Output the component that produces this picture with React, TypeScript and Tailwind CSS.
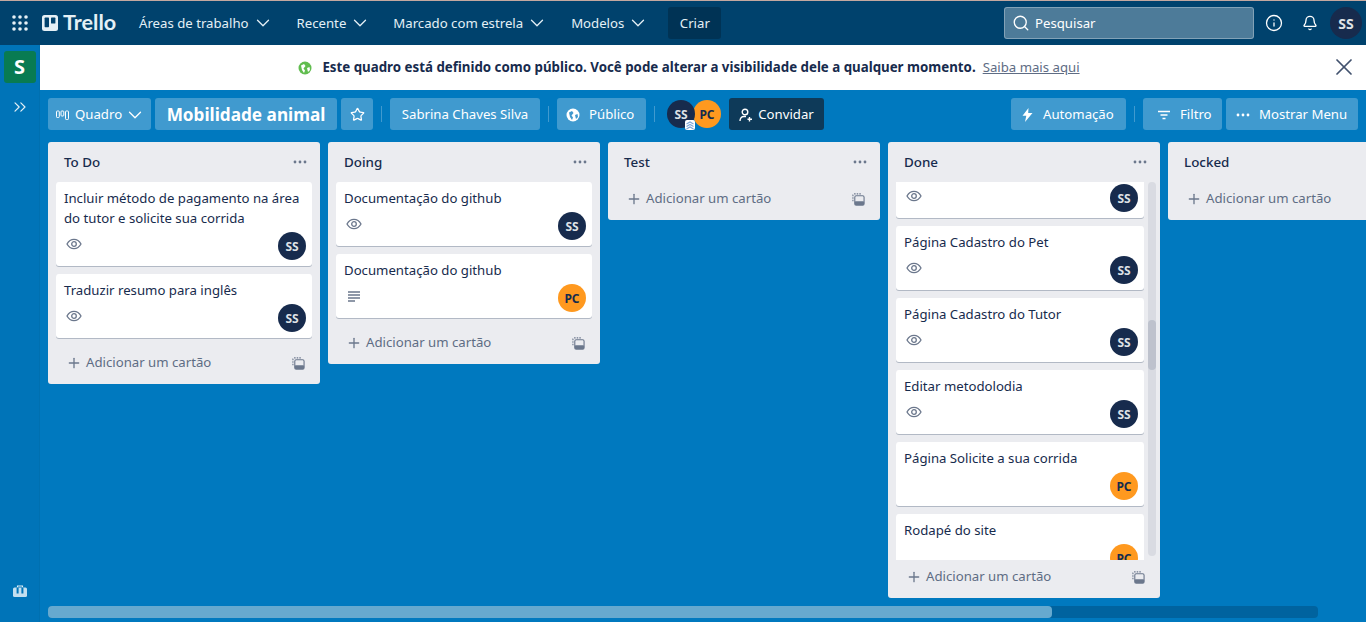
import React from "react";
import { Bell, ChevronDown, ChevronsRight, Info, Plus, Search, Star, X } from "lucide-react";

const EyeIcon = () => (
  <svg width="16" height="16" viewBox="0 0 16 16" fill="none" stroke="#6b778c" strokeWidth="1.3">
    <path d="M1 8C2.700 4.900 5.200 3.400 8 3.400S13.300 4.900 15 8C13.300 11.100 10.800 12.600 8 12.600S2.700 11.100 1 8Z" />
    <circle cx="8" cy="8" r="2.300" />
  </svg>
);

const TemplateIcon = () => (
  <svg width="13" height="13" viewBox="0 0 14 14" fill="none" stroke="#6b778c" strokeWidth="1.2">
    <path d="M1 9V2.500C1 1.700 1.700 1 2.500 1H10" strokeDasharray="1.600 1.200" />
    <rect x="3" y="3" width="10" height="10" rx="1.500" />
    <rect x="3" y="9" width="10" height="4" rx="1" fill="#6b778c" stroke="none" />
  </svg>
);

const Dots = ({ color = "#6b778c" }: { color?: string }) => (
  <svg width="14" height="4" viewBox="0 0 14 4" fill={color}>
    <circle cx="2" cy="2" r="1.400" />
    <circle cx="7" cy="2" r="1.400" />
    <circle cx="12" cy="2" r="1.400" />
  </svg>
);

const Avatar = ({ who, size = "card" }: { who: "SS" | "PC"; size?: string }) => (
  <div
    className={
      (who === "SS" ? "bg-[#172b4d] text-[#dfe1e6] " : "bg-[#ff991f] text-[#172b4d] ") +
      (size === "card" ? "h-7 w-7 text-xs " : "h-8 w-8 text-sm ") +
      "flex shrink-0 items-center justify-center rounded-full pt-px font-bold"
    }
  >
    {who}
  </div>
);

type CardData = { title: string; who: "SS" | "PC"; badge?: "eye" | "desc" | "none" };

const Badges = ({ who, badge = "eye" }: { who: "SS" | "PC"; badge?: string }) => (
  <div className="flex items-start justify-between">
    <div className="flex h-5 w-5 items-center justify-center pt-1">
      {badge === "eye" && <EyeIcon />}
      {badge === "desc" && (
        <svg width="14" height="14" viewBox="0 0 14 14" stroke="#6b778c" strokeWidth="1.500">
          <path d="M1 3h12M1 6h12M1 9h12M1 12h7" />
        </svg>
      )}
    </div>
    <Avatar who={who} />
  </div>
);

const Card = ({ title, who, badge = "eye" }: CardData) => (
  <div className="shrink-0 rounded-[3px] bg-white pb-[6px] pl-2 pr-[6px] pt-[6px] text-[13.2px] leading-5 text-[#172b4d] shadow-[0_1px_0_#091e4240]">
    <div>{title}</div>
    <div className="mt-1">
      <Badges who={who} badge={badge} />
    </div>
  </div>
);

const AddCard = () => (
  <div className="flex h-[38px] shrink-0 items-center justify-between pb-1 pl-[18px] pr-[15px] text-[13.2px] text-[#5e6c84]">
    <div className="flex items-center gap-[4px]">
      <Plus size={16} strokeWidth={2} color="#6b778c" />
      <span>Adicionar um cartão</span>
    </div>
    <TemplateIcon />
  </div>
);

const ListHead = ({ title }: { title: string }) => (
  <div className="flex h-10 shrink-0 items-center justify-between pl-4 pr-[13px] text-[13.4px] font-medium leading-5 text-[#172b4d]">
    <span>{title}</span>
    <Dots />
  </div>
);

const List = ({ title, cards }: { title: string; cards: CardData[] }) => (
  <div className="w-[272px] shrink-0 self-start rounded-[3px] bg-[#ebecf0]">
    <ListHead title={title} />
    {cards.length > 0 && (
      <div className="mb-2 flex flex-col gap-2 px-2">
        {cards.map((c, i) => (
          <Card key={i} {...c} />
        ))}
      </div>
    )}
    <AddCard />
  </div>
);

const doneCards: CardData[] = [
  { title: "Página Cadastro do Pet", who: "SS" },
  { title: "Página Cadastro do Tutor", who: "SS" },
  { title: "Editar metodolodia", who: "SS" },
  { title: "Página Solicite a sua corrida", who: "PC", badge: "none" },
  { title: "Rodapé do site", who: "PC", badge: "none" },
];

const NavItem = ({ label, className }: { label: string; className: string }) => (
  <div className={"flex items-center gap-[3px] text-[13.2px] text-[#e4f0f6] " + className}>
    <span className="pt-px">{label}</span>
    <ChevronDown size={22} strokeWidth={1.400} />
  </div>
);

const Divider = ({ className = "" }: { className?: string }) => (
  <div className={"h-4 w-px bg-white/25 " + className} />
);

const barBtn = "flex h-8 shrink-0 items-center rounded-[3px] bg-white/25 pt-px text-[13.2px] text-white";

export default function App() {
  return (
    <div className="flex h-[622px] w-full flex-col overflow-hidden bg-[#0079bf] font-['Noto_Sans',sans-serif]">
      <div className="h-px shrink-0 bg-[#c4a8a0]" />
      {/* top bar */}
      <header className="flex h-11 shrink-0 items-center bg-[#00426d] pl-3 pr-1 text-white">
        <svg width="16" height="16" viewBox="0 0 16 16" fill="#e4f0f6">
          {[2, 8, 14].flatMap((y) => [2, 8, 14].map((x) => <circle key={x + "-" + y} cx={x} cy={y} r="1.800" />))}
        </svg>
        <svg className="ml-[14px]" width="16" height="16" viewBox="0 0 16 16">
          <rect width="16" height="16" rx="2.500" fill="#e4f0f6" />
          <rect x="2.600" y="2.600" width="4.400" height="9.600" rx="0.700" fill="#00426d" />
          <rect x="9" y="2.600" width="4.400" height="6" rx="0.700" fill="#00426d" />
        </svg>
        <span className="ml-[5px] w-[60px] font-['Lato',sans-serif] text-[21.6px] font-bold leading-none text-[#e4f0f6]">
          Trello
        </span>
        <NavItem label="Áreas de trabalho" className="ml-[16px]" />
        <NavItem label="Recente" className="ml-[23px]" />
        <NavItem label="Marcado com estrela" className="ml-[22px]" />
        <NavItem label="Modelos" className="ml-[23px]" />
        <div className="ml-[19px] flex h-8 w-[53px] items-center justify-center rounded-[3px] bg-[#003355] pt-px text-[13.2px] text-[#e4f0f6]">
          Criar
        </div>
        <div className="ml-auto flex h-8 w-[250px] items-center rounded-[3px] border border-white/30 bg-white/30 pl-[7px] text-[13.2px] text-white">
          <Search size={18} strokeWidth={1.800} />
          <span className="ml-[5px] pt-[2px]">Pesquisar</span>
        </div>
        <Info className="ml-[11px]" size={18} strokeWidth={1.700} />
        <Bell className="ml-[19px]" size={16} strokeWidth={2} />
        <div className="ml-3">
          <Avatar who="SS" size="big" />
        </div>
      </header>

      <div className="flex min-h-0 flex-1">
        {/* workspace rail */}
        <aside className="flex w-10 shrink-0 flex-col items-center border-r border-[#0070b0] bg-[#0074b8] pt-[6px]">
          <div className="flex h-8 w-8 items-center justify-center rounded-[3px] bg-[#087b52] text-xl font-bold text-white">
            S
          </div>
          <ChevronsRight className="mt-[14px]" size={20} strokeWidth={1.400} color="#e4f0f6" />
          <svg className="mb-[25px] mt-auto" width="14" height="12" viewBox="0 0 14 12">
            <path d="M4.500 2.500V1h5v1.500" fill="none" stroke="#e4f0f6" strokeWidth="1.100" />
            <rect y="2.500" width="14" height="9.500" rx="1.500" fill="#c4dfef" />
            <rect x="3.600" y="2.500" width="2" height="6" fill="#0074b8" />
            <rect x="8.400" y="2.500" width="2" height="6" fill="#0074b8" />
          </svg>
        </aside>

        <main className="flex min-w-0 flex-1 flex-col">
          {/* public banner */}
          <div className="relative flex h-[45px] shrink-0 items-center justify-center bg-white pr-[28px] text-[13.3px] text-[#172b4d]">
            <svg width="14" height="14" viewBox="0 0 14 14">
              <circle cx="7" cy="7" r="6.500" fill="#61bd4f" />
              <path d="M3 4.500 6 3l1.500 2-2 2.500 1.500 2-1 2.500-2-3ZM9 7l2.500-1 .5 3-2 2Z" fill="#fff" />
            </svg>
            <span className="ml-[10px] font-bold">
              Este quadro está definido como público. Você pode alterar a visibilidade dele a qualquer momento.
            </span>
            <span className="ml-[7px] text-[13.2px] text-[#5e6c84] underline">Saiba mais aqui</span>
            <X className="absolute right-2 top-2" size={28} strokeWidth={1.500} color="#42526e" />
          </div>

          {/* board toolbar */}
          <div className="flex h-12 shrink-0 items-center pl-2 pr-2">
            <div className={barBtn + " w-[103px] pl-2"}>
              <svg width="13" height="12" viewBox="0 0 13 12" fill="none" stroke="#fff" strokeWidth="1">
                <rect x="0.500" y="2" width="2.800" height="6.500" rx="0.800" />
                <rect x="5" y="2" width="2.800" height="5" rx="0.800" />
                <rect x="9.500" y="2" width="3" height="8.500" rx="0.800" />
              </svg>
              <span className="ml-[6px]">Quadro</span>
              <ChevronDown className="ml-[2px]" size={22} strokeWidth={1.400} />
            </div>
            <div className="ml-1 flex h-8 w-[182px] shrink-0 items-center justify-center rounded-[3px] bg-white/25 pt-px text-[17.2px] font-bold text-white">
              Mobilidade animal
            </div>
            <div className={barBtn + " ml-1 w-8 justify-center"}>
              <Star size={15} strokeWidth={2} />
            </div>
            <Divider className="ml-2" />
            <div className={barBtn + " ml-2 w-[150px] justify-center"}>Sabrina Chaves Silva</div>
            <Divider className="ml-2" />
            <div className={barBtn + " ml-2 w-[89px] pl-[9px]"}>
              <svg width="14" height="14" viewBox="0 0 14 14">
                <circle cx="7" cy="7" r="6.500" fill="#fff" />
                <path d="M3 4.500 6 3l1.500 2-2 2.500 1.500 2-1 2.500-2-3ZM9 7l2.500-1 .5 3-2 2Z" fill="#4199ce" />
              </svg>
              <span className="ml-[9px]">Público</span>
            </div>
            <Divider className="ml-2" />
            <div className="relative ml-3 flex">
              <div className="z-10">
                <Avatar who="SS" />
              </div>
              <div className="-ml-[2px]">
                <Avatar who="PC" />
              </div>
              <svg className="absolute left-[18px] top-[20px] z-20" width="10" height="10" viewBox="0 0 10 10" fill="none" stroke="#7fa8d8" strokeWidth="1.200">
                <rect width="10" height="10" rx="2" fill="#fff" stroke="none" />
                <path d="M1.500 4 5 2l3.500 2M1.500 6.500 5 4.500l3.500 2M1.500 9 5 7l3.500 2" />
              </svg>
            </div>
            <div className="ml-2 flex h-8 w-[95px] items-center justify-center gap-[5px] rounded-[3px] bg-[#0e3a59] pt-px text-[13.2px] text-white">
              <svg width="14" height="14" viewBox="0 0 14 14" fill="none" stroke="#fff" strokeWidth="1.400">
                <circle cx="6" cy="4" r="2.800" />
                <path d="M1 13c0-3 1.500-4.500 4-4.500h2M10.500 9v4.500M8.500 11.200h4.500" />
              </svg>
              Convidar
            </div>
            <div className={barBtn + " ml-auto w-[115px] pl-[11px]"}>
              <svg width="11" height="14" viewBox="0 0 11 14" fill="#fff">
                <path d="M6.500 0 .5 7.800h3.800L3 14l7.500-9H6.200Z" />
              </svg>
              <span className="ml-[10px]">Automação</span>
            </div>
            <Divider className="ml-2" />
            <div className={barBtn + " ml-2 w-[79px] pl-[15px]"}>
              <svg width="12" height="10" viewBox="0 0 12 10" stroke="#fff" strokeWidth="1.300">
                <path d="M0 1.500h12M2.500 5h7M4.500 8.500h3" />
              </svg>
              <span className="ml-[10px]">Filtro</span>
            </div>
            <div className={barBtn + " ml-1 w-[132px] pl-[10px]"}>
              <Dots color="#fff" />
              <span className="ml-[9px]">Mostrar Menu</span>
            </div>
          </div>

          {/* lists */}
          <div className="flex min-h-0 flex-1 items-start gap-2 overflow-hidden pl-2 pt-1">
            <List
              title="To Do"
              cards={[
                { title: "Incluir método de pagamento na área do tutor e solicite sua corrida", who: "SS" },
                { title: "Traduzir resumo para inglês", who: "SS" },
              ]}
            />
            <List
              title="Doing"
              cards={[
                { title: "Documentação do github", who: "SS" },
                { title: "Documentação do github", who: "PC", badge: "desc" },
              ]}
            />
            <List title="Test" cards={[]} />
            <div className="flex h-[456px] w-[272px] shrink-0 flex-col rounded-[3px] bg-[#ebecf0]">
              <ListHead title="Done" />
              <div className="relative h-[378px] shrink-0 overflow-hidden pl-2 pr-4">
                <div className="flex flex-col gap-2">
                  {/* first card is scrolled past the top, only its badges show */}
                  <div className="h-9 shrink-0 rounded-b-[3px] bg-white pl-2 pr-[6px] pt-[2px] shadow-[0_1px_0_#091e4240]">
                    <Badges who="SS" />
                  </div>
                  {doneCards.map((c, i) => (
                    <Card key={i} {...c} />
                  ))}
                </div>
                <div className="absolute right-1 top-0 h-[374px] w-2 rounded-[4px] bg-[#091e4214]">
                  <div className="mt-[138px] h-[50px] rounded-[4px] bg-[#091e4221]" />
                </div>
              </div>
              <AddCard />
            </div>
            <List title="Locked" cards={[]} />
          </div>

          {/* board scrollbar */}
          <div className="mb-1 ml-2 mr-12 h-3 shrink-0 rounded-[4px] bg-[#00639f]">
            <div className="h-3 w-[1004px] rounded-[4px] bg-[#66a9cf]" />
          </div>
        </main>
      </div>
    </div>
  );
}
